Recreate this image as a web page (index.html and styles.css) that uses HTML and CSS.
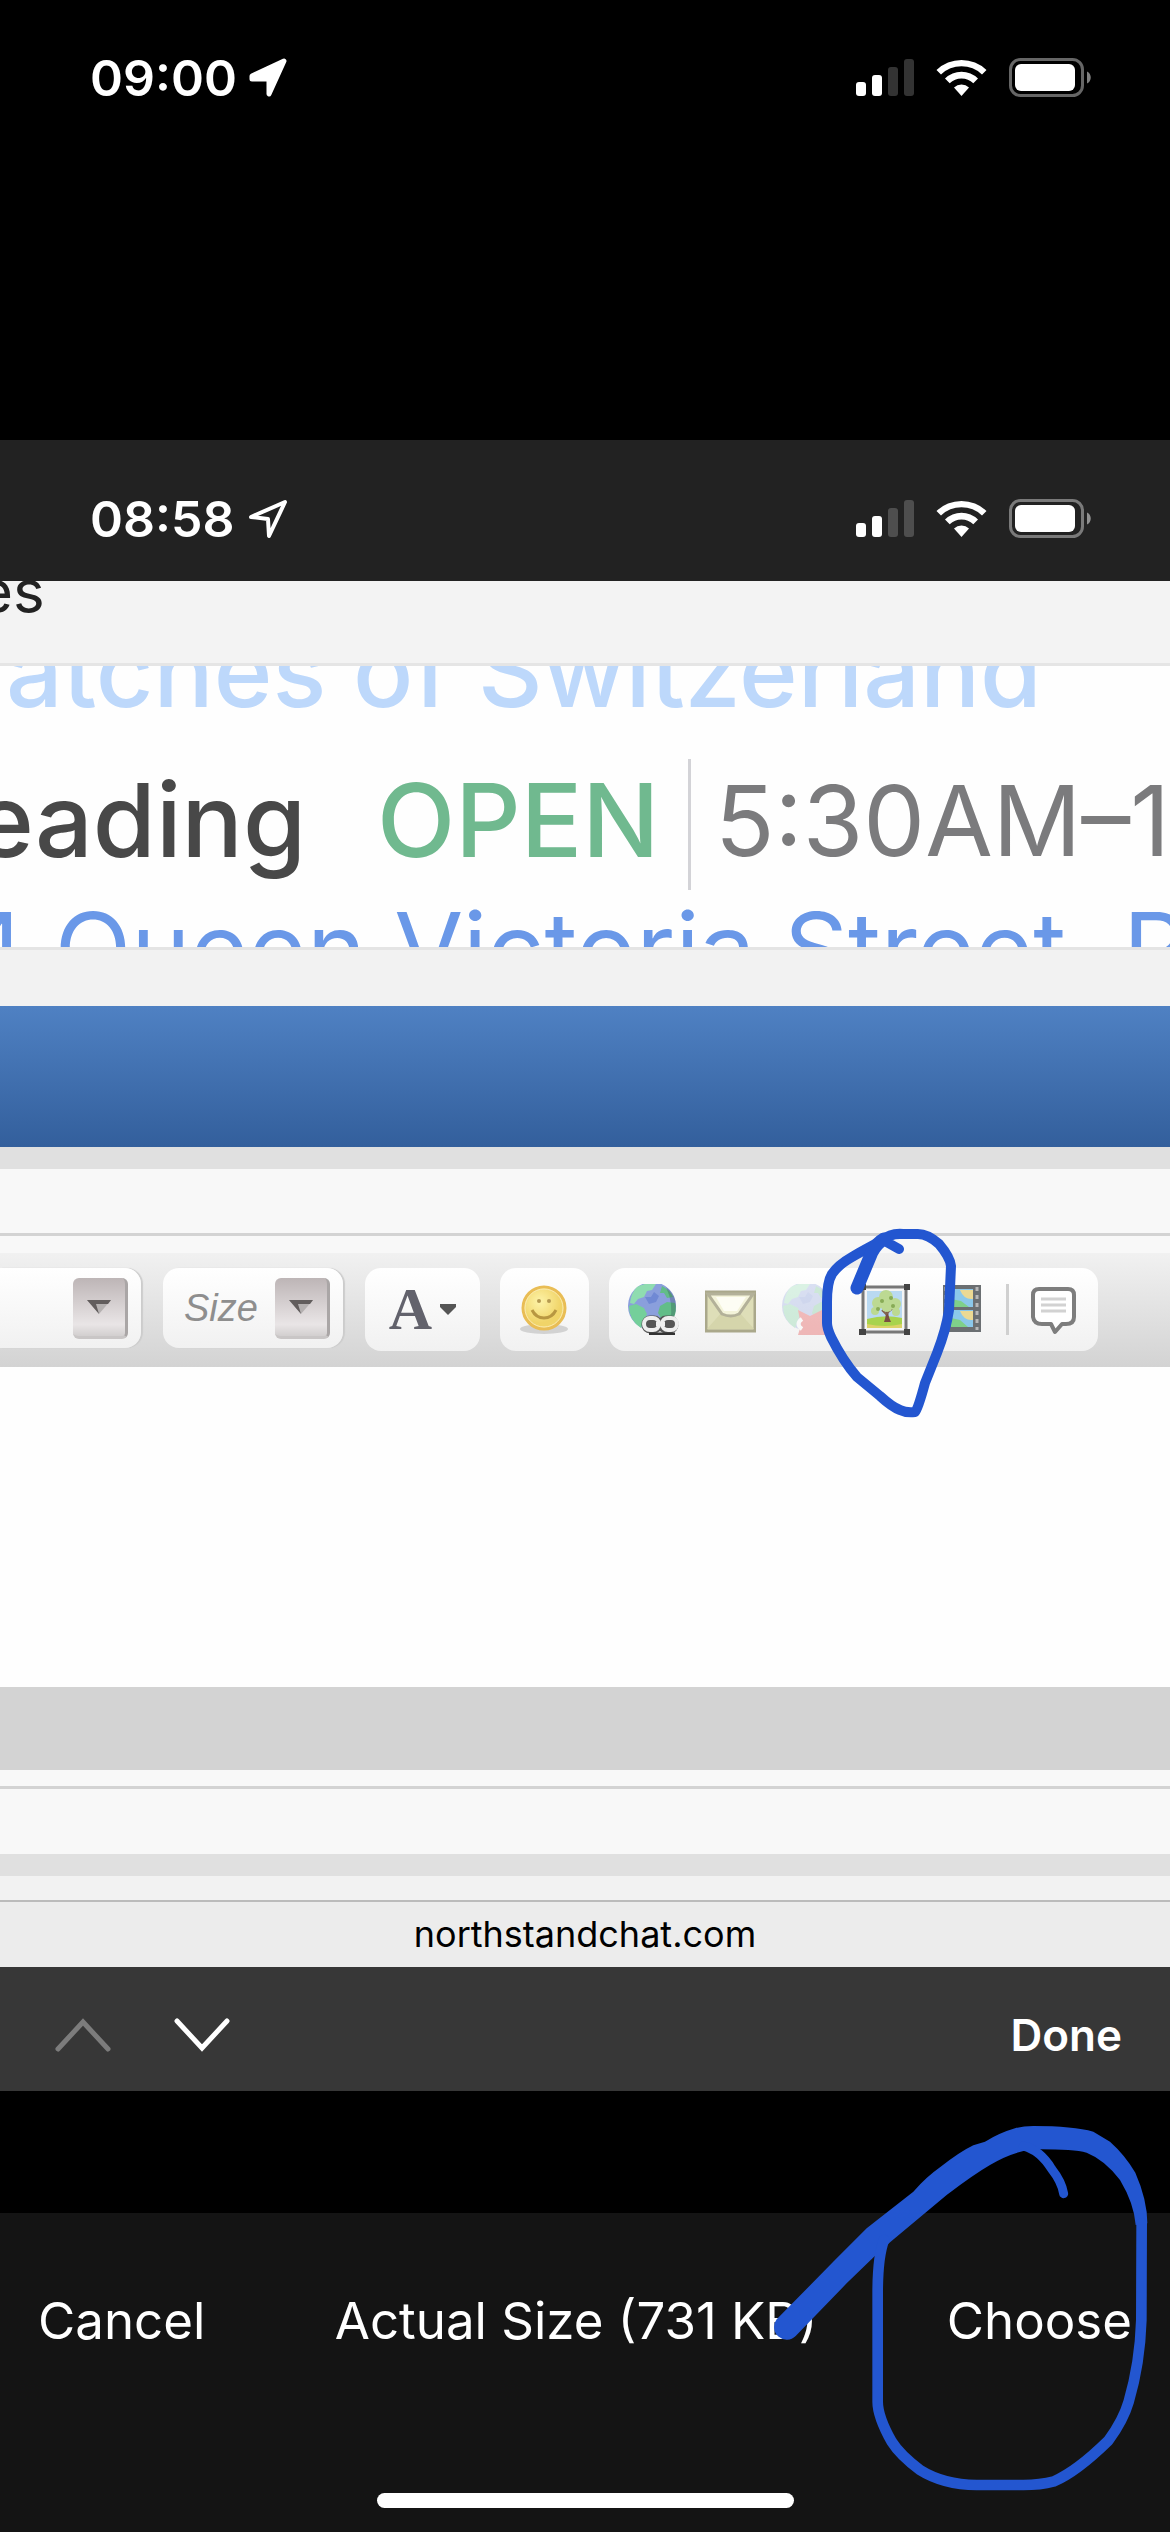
FILE: index.html
```html
<!DOCTYPE html>
<html lang="en">
<head>
    <meta charset="UTF-8">
    <meta name="viewport" content="width=device-width, initial-scale=1.0">
    <title>Choose Photo</title>
    <link rel="stylesheet" href="styles.css">
</head>
<body>
    <!-- shared icons -->
    <svg class="defs" width="0" height="0">
        <symbol id="status" viewBox="0 0 236 40">
            <rect x="0" y="24" width="10" height="14" rx="3"/>
            <rect x="16" y="17" width="10" height="21" rx="3"/>
            <rect x="32" y="9" width="10" height="29" rx="3" opacity=".2"/>
            <rect x="48" y="1" width="10" height="37" rx="3" opacity=".2"/>
            <path d="M80.500 12a36 36 0 0 1 50 0l-4.500 4.500a29.500 29.500 0 0 0-41 0z"/>
            <path d="M89 20.500a23.500 23.500 0 0 1 33 0l-4.700 4.700a17 17 0 0 0-23.600 0z"/>
            <path d="M98 29.500a11 11 0 0 1 15 0l-7.500 8.500z"/>
            <rect x="154.500" y="1.500" width="72" height="36" rx="10" fill="none" stroke="#fff" stroke-width="3" opacity=".4"/>
            <rect x="159" y="6" width="60" height="27" rx="6"/>
            <path d="M231 13.500c5 2 5 10 0 12z" opacity=".5"/>
        </symbol>
        <symbol id="globe" viewBox="0 0 51 51">
            <circle cx="24" cy="22" r="24" fill="#8a9fdc"/>
            <path d="M9 3q9-5 19-3l-4 6-5 1-3 6-6 2-4 5-4-1q1-10 7-16z" fill="#8fdcb0"/>
            <path d="M1 22l7-2 8 4 3 6-3 6-3 8Q1 36 1 22z" fill="#74cf9a"/>
            <path d="M34 2q8 4 11 11l-6 1-3-5-4 0zM32 22l7-4 8 1q2 8-1 14l-8 6-5-5-3-5z" fill="#62bd88"/>
            <path d="M17 13l6 0 3-5 5 4-3 6-7 2z" fill="#7089d4"/>
            <path d="M38 3q10 8 10 19t-6 16q4-18-4-35z" fill="#234" opacity=".25"/>
        </symbol>
    </svg>

    <header class="status-bar">
        <span class="time">09:00</span>
        <svg class="arrow" viewBox="0 0 40 40"><path d="M4 18 36 3 21 36V21H4z" fill="#fff" stroke="#fff" stroke-width="5" stroke-linejoin="round"/></svg>
        <svg class="status-icons"><use href="#status"/></svg>
    </header>

    <main class="photo">
        <div class="status-bar inner-bar">
            <span class="time">08:58</span>
            <svg class="arrow" viewBox="0 0 40 40"><path d="M3 18 37 3 21 37 20 20z" fill="none" stroke="#fff" stroke-width="4" stroke-linejoin="round"/></svg>
            <svg class="status-icons"><use href="#status"/></svg>
        </div>

        <div class="page-top">es</div>

        <section class="listing">
            <div class="listing-name">atches of Switzerland</div>
            <div class="listing-hours">
                <span class="place">eading</span>
                <span class="open">OPEN</span>
                <span class="hours">5:30AM–1</span>
            </div>
            <div class="listing-address">4 Queen Victoria Street, R</div>
        </section>

        <div class="page-gap"></div>
        <div class="title-bar"></div>

        <section class="editor">
            <div class="editor-head"></div>
            <div class="toolbar">
                <label class="pill combo combo-font">
                    <select aria-label="Font"><option></option></select>
                    <span class="combo-arrow"><svg viewBox="0 0 24 14"><path d="M0 0h24L12 14z" fill="#b5b1b1"/><path d="M0 0h24l-3 4H9l3 10z" fill="#625d5d"/></svg></span>
                </label>
                <label class="pill combo">
                    <select aria-label="Size"><option>Size</option></select>
                    <span class="combo-arrow"><svg viewBox="0 0 24 14"><path d="M0 0h24L12 14z" fill="#b5b1b1"/><path d="M0 0h24l-3 4H9l3 10z" fill="#625d5d"/></svg></span>
                </label>
                <button class="pill color" aria-label="Text colour">A
                    <svg class="caret" viewBox="0 0 16 11"><path d="M0 0h16v3L8 11 0 3z" fill="#555"/></svg>
                </button>
                <button class="pill smiley" aria-label="Smilies">
                    <svg viewBox="0 0 51 51">
                        <defs>
                            <radialGradient id="face" cx=".4" cy=".35"><stop offset="0" stop-color="#fdf3a8"/><stop offset="1" stop-color="#f0d468"/></radialGradient>
                        </defs>
                        <ellipse cx="25" cy="45" rx="24" ry="5" fill="#d2d2d2"/>
                        <circle cx="25" cy="24" r="21" fill="url(#face)" stroke="#e9bd55" stroke-width="3"/>
                        <circle cx="25" cy="24" r="19" fill="none" stroke="#faeab0" stroke-width="1"/>
                        <circle cx="20" cy="17" r="2" fill="#b59a52"/><circle cx="30" cy="17" r="2" fill="#b59a52"/>
                        <path d="M13 26q4 8 12 8t12-8" fill="none" stroke="#b89741" stroke-width="3"/>
                    </svg>
                </button>
                <div class="pill inserts">
                    <button aria-label="Insert link">
                        <svg viewBox="0 0 51 51">
                            <use href="#globe"/>
                            <g fill="none" stroke="#555" stroke-width="9"><rect x="18" y="36" width="12" height="9" rx="4"/><rect x="34" y="36" width="12" height="9" rx="4"/></g>
                            <g fill="none" stroke="#eee" stroke-width="4"><rect x="16" y="34" width="15" height="12" rx="6"/><rect x="34" y="34" width="15" height="12" rx="6"/></g>
                            <path d="M28 40h9" stroke="#eee" stroke-width="4"/>
                            <path d="M21 50h26" stroke="#333" stroke-width="3"/>
                        </svg>
                    </button>
                    <button aria-label="Insert email">
                        <svg viewBox="0 0 51 51">
                            <rect x="1" y="8" width="49" height="39" fill="#dedeb8" stroke="#aaa88b" stroke-width="3"/>
                            <path d="M2 45 17 28h17l15 17z" fill="#d5d5ab"/>
                            <path d="M3 10h45L34 30q-8 4-17 0z" fill="#f3f3d9" stroke="#b3b199" stroke-width="3"/>
                            <path d="M11 13h30l-9 14H19z" fill="#fdfdf4"/>
                        </svg>
                    </button>
                    <button class="off" aria-label="Remove link">
                        <svg viewBox="0 0 51 51">
                            <use href="#globe"/>
                            <path d="M16 26l12 6 12-6 8 5-3 9 5 11H16l3-10z" fill="#e22c2c"/>
                            <path d="M20 35q-7 5 0 10" fill="none" stroke="#fff" stroke-width="4"/>
                        </svg>
                    </button>
                    <button aria-label="Insert image">
                        <svg viewBox="0 0 51 51">
                            <rect x="4" y="3" width="43" height="45" fill="#f4f4f4" stroke="#777" stroke-width="3"/>
                            <rect x="8" y="7" width="35" height="37" fill="#b9d9f2"/>
                            <path d="M8 35q18-5 35-1v10H8z" fill="#a8d34d"/><path d="M8 40q18 4 35 0v4H8z" fill="#dcd267"/>
                            <path d="M26 22q2 9-1 16h7q-4-7-2-16z" fill="#7a4d42"/>
                            <path d="M23 26l4 4 7-6" stroke="#82644d" stroke-width="2" fill="none"/>
                            <g fill="#bcd992"><circle cx="19" cy="19" r="6"/><circle cx="27" cy="13" r="7"/><circle cx="36" cy="20" r="6"/><circle cx="28" cy="22" r="6"/><circle cx="16" cy="27" r="4"/><circle cx="37" cy="28" r="4"/></g>
                            <g fill="#87ab56"><circle cx="23" cy="17" r="2"/><circle cx="32" cy="14" r="2"/><circle cx="34" cy="22" r="2"/><circle cx="19" cy="25" r="2"/></g>
                            <path d="M0 0h7v6H0zM45 0h6v6h-6zM0 45h7v6H0zM45 45h6v6h-6z" fill="#444"/>
                        </svg>
                    </button>
                    <button aria-label="Insert video">
                        <svg viewBox="0 0 51 51">
                            <rect x="7" y="1" width="38" height="47" fill="#6b6f72"/>
                            <rect x="15" y="5" width="22" height="18" fill="#8cc8ea"/><rect x="15" y="26" width="22" height="17" fill="#8cc8ea"/>
                            <path d="M15 23V15l10 2 8 6zM15 43v-9l9 2 8 7z" fill="#7fd08a"/>
                            <path d="M24 6h13v9q-9 1-13-9zM24 27h13v9q-9 1-13-9z" fill="#ecd993"/>
                            <path d="M10 3v43M41 3v43" stroke="#b8b8b8" stroke-width="3" stroke-dasharray="4 4"/>
                        </svg>
                    </button>
                    <span class="divider"></span>
                    <button aria-label="Quote">
                        <svg viewBox="0 0 51 51">
                            <path d="M11 5h29q6 0 6 6v22q0 7-8 7h-4l-7 8-4-8h-9q-8 0-9-7V11q0-6 6-6z" fill="#fff" stroke="#7d7d7d" stroke-width="4" stroke-linejoin="round"/>
                            <path d="M13 15h25M13 21h25M13 27h25" stroke="#d2d2d2" stroke-width="3"/>
                        </svg>
                    </button>
                </div>
                <svg class="ink ink-small" viewBox="815 1225 150 195">
                    <path d="M899 1249 883 1240Q862 1251 852 1257 838 1265 832 1274 827 1282 827 1302V1323Q827 1328 831 1337 843 1361 857 1377L880 1396Q892 1407 900 1410 906 1413 915 1412 918 1409 925 1383L937 1353Q946 1330 949 1310L951 1266Q950 1257 939 1244 927 1233 916 1234H903Q890 1233 883 1240" stroke-width="10"/>
                    <path d="M857 1288 872 1252Q877 1243 884 1239" stroke-width="13"/>
                </svg>
            </div>
            <textarea class="message" aria-label="Message"></textarea>
            <div class="resizer"></div>
            <div class="editor-foot"></div>
            <div class="page-end"></div>
        </section>

        <div class="address-bar">northstandchat.com</div>

        <div class="keyboard-bar">
            <button class="chevron" aria-label="Previous" disabled><svg viewBox="0 0 56 34"><path d="M3 31 28 4 53 31"/></svg></button>
            <button class="chevron" aria-label="Next"><svg viewBox="0 0 56 34"><path d="M3 3 28 30 53 3"/></svg></button>
            <button class="done">Done</button>
        </div>
    </main>

    <footer class="picker">
        <div class="picker-actions">
            <button>Cancel</button>
            <button>Actual Size (731 KB)</button>
            <button>Choose</button>
        </div>
        <div class="home-indicator"></div>
        <svg class="ink ink-large" viewBox="0 0 1290 1320">
            <path class="fill" d="M110 688 290 505 380 415 520 305Q560 260 600 232 660 185 700 166L735 155Q780 128 825 115 850 108 880 108 1000 108 1060 125L1110 155Q1155 195 1186 248 1222 330 1222 400L1187 405Q1182 340 1140 270 1095 210 1040 188 1000 178 900 178L850 183Q800 195 750 225 700 254 620 315L452 455 410 493 320 580 167 738A38 38 0 0 1 110 688z"/>
            <path d="M432 450Q413 500 413 610V935Q413 980 455 1055 480 1095 540 1140 610 1184 710 1185H850Q900 1185 942 1174 1010 1145 1105 1052 1150 990 1166 935 1200 820 1204 690L1205 400" stroke-width="32"/>
            <path d="M850 168Q900 180 935 237 965 275 971 311" stroke-width="27"/>
        </svg>
    </footer>
</body>
</html>
```

FILE: styles.css
```css
* {
    box-sizing: border-box;
}
body {
    margin: 0;
    min-height: 100vh;
    display: flex;
    flex-direction: column;
    background-color: #000;
    font-family: Inter, "Liberation Sans", sans-serif;
    overflow-x: hidden;
}
button {
    padding: 0;
    border: none;
    background: none;
    color: #fff;
    font-family: inherit;
}
svg {
    display: block;
}
.defs {
    position: absolute;
}

/* status bars */
.status-bar {
    display: flex;
    align-items: center;
    height: 156px;
    padding: 0 78px 0 90px;
    color: #fff;
}
.time {
    width: 158px;
    font-size: 50px;
    font-weight: 600;
}
.arrow {
    width: 40px;
    height: 40px;
}
.status-icons {
    width: 236px;
    height: 40px;
    margin-left: auto;
    fill: #fff;
}
.photo {
    margin-top: 284px;
}
.inner-bar {
    height: 141px;
    padding-top: 16px;
    background-color: #222;
}

/* zoomed page */
.page-top {
    height: 85px;
    margin-left: -22px;
    border-bottom: 3px solid #e5e5e5;
    background-color: #f3f3f3;
    color: #222;
    font-size: 60px;
    line-height: 20px;
    overflow: hidden;
}
.listing {
    height: 281px;
    overflow: hidden;
    background-color: #fefefe;
    white-space: nowrap;
}
.listing-name {
    margin: -45px 0 38px 6px;
    color: #bdd8fb;
    font-size: 100px;
    font-weight: 500;
    line-height: 100px;
}
.listing-hours {
    display: flex;
    margin-left: -26px;
    font-size: 102px;
    line-height: 123px;
}
.listing-hours span {
    flex-shrink: 0;
}
.place {
    width: 403px;
    color: #484848;
    font-weight: 500;
}
.open {
    width: 311px;
    color: #70b98f;
    font-weight: 500;
}
.hours {
    height: 131px;
    padding-left: 24px;
    border-left: 3px solid #d3d3d7;
    color: #7b7b7d;
    font-size: 98px;
}
.listing-address {
    margin-left: -38px;
    color: #6a98e8;
    font-size: 100px;
    line-height: 118px;
}
.page-gap {
    height: 59px;
    border-top: 3px solid #e4e4e4;
    background-color: #f2f2f2;
}
.title-bar {
    height: 141px;
    background: linear-gradient(#4f81c3, #335f9c);
}

/* editor */
.editor-head {
    height: 106px;
    border-top: 22px solid #e0e0e0;
    background: linear-gradient(#d3d3d3, #d3d3d3) 0 64px / 100% 3px no-repeat #f8f8f8;
}
.toolbar {
    position: relative;
    display: flex;
    height: 114px;
    padding-top: 15px;
    background: linear-gradient(#f1f1f1, #d3d3d3);
}
.pill {
    display: flex;
    align-items: center;
    height: 83px;
    margin-right: 20px;
    border-radius: 16px;
    background: linear-gradient(#fff, #f1f1f1);
}
.combo {
    width: 180px;
    height: 80px;
    margin-right: 22px;
    padding: 0 13px 0 21px;
    box-shadow: 2px 0 1px #ccc;
}
.combo-font {
    width: 141px;
    padding-left: 0;
    border-radius: 0 16px 16px 0;
}
.combo select {
    flex: 1;
    min-width: 0;
    padding: 0;
    border: none;
    appearance: none;
    background: none;
    color: #8e8e8e;
    font: italic 38px "Liberation Sans", sans-serif;
}
.combo-arrow {
    display: flex;
    align-items: center;
    justify-content: center;
    width: 55px;
    height: 61px;
    border-right: 3px solid #aaa6a6;
    border-bottom: 3px solid #c9c6c6;
    border-radius: 6px;
    background: linear-gradient(#bdb5b6, #e9e5e6 80%, #d2cfcf);
    pointer-events: none;
}
.combo-arrow svg {
    width: 24px;
    height: 14px;
}
.color {
    justify-content: center;
    gap: 8px;
    width: 115px;
    color: #62626c;
    font: bold 60px "Liberation Serif", serif;
}
.caret {
    width: 16px;
    height: 11px;
}
.smiley {
    justify-content: center;
    width: 89px;
}
.smiley svg,
.inserts svg {
    width: 51px;
    height: 51px;
}
.inserts {
    gap: 26px;
    padding: 0 19px;
}
.off {
    opacity: 0.3;
}
.divider {
    width: 3px;
    height: 51px;
    margin: 0 -7px;
    background-color: #d0d0d0;
}
.message {
    display: block;
    width: 100%;
    height: 320px;
    border: none;
    background-color: #fefefe;
    resize: none;
}
.resizer {
    height: 83px;
    background-color: #d3d3d3;
}
.editor-foot {
    height: 106px;
    border-bottom: 22px solid #e0e0e0;
    background: linear-gradient(#d3d3d3, #d3d3d3) 0 16px / 100% 3px no-repeat #f8f8f8;
}
.page-end {
    height: 24px;
    background-color: #f2f2f2;
}
.address-bar {
    padding: 10px 0 11px;
    border-top: 2px solid #bbb;
    background-color: #ececec;
    font-size: 36px;
    line-height: 44px;
    text-align: center;
}
.keyboard-bar {
    display: flex;
    align-items: center;
    height: 124px;
    padding: 12px 48px 0 55px;
    background-color: #373737;
}
.chevron {
    margin-right: 63px;
}
.chevron svg {
    width: 56px;
    height: 34px;
    fill: none;
    stroke: #fff;
    stroke-width: 5;
    stroke-linecap: round;
}
.chevron:disabled svg {
    stroke: #7c7c7c;
}
.done {
    margin-left: auto;
    font-size: 44px;
    font-weight: 600;
}

/* bottom sheet */
.picker {
    position: relative;
    flex: 1;
    display: flex;
    flex-direction: column;
    justify-content: space-between;
    margin-top: 122px;
    padding: 76px 38px 24px;
    background-color: #141414;
}
.picker-actions {
    display: flex;
    justify-content: space-between;
}
.picker-actions button {
    font-size: 51px;
    line-height: 64px;
    white-space: nowrap;
}
.home-indicator {
    width: 417px;
    height: 15px;
    margin: 0 auto;
    border-radius: 8px;
    background-color: #fff;
}

/* pen marks */
.ink {
    position: absolute;
    fill: none;
    stroke: #2356d0;
    stroke-linecap: round;
    stroke-linejoin: round;
    pointer-events: none;
}
.ink .fill {
    fill: #2356d0;
    stroke: none;
}
.ink-small {
    top: -28px;
    left: 815px;
    width: 150px;
    height: 195px;
}
.ink-large {
    top: -123px;
    right: 0;
    width: 430px;
    height: 440px;
}
```
